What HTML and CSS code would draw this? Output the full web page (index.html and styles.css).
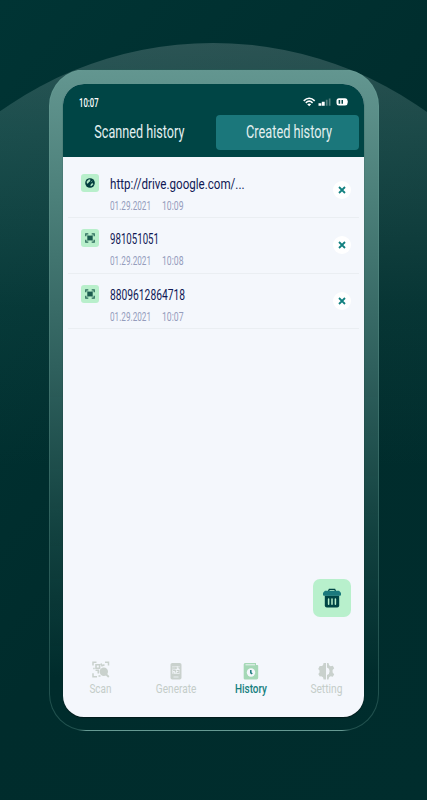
FILE: index.html
```html
<!DOCTYPE html>
<html lang="en">
<head>
  <meta charset="UTF-8">
  <title>Created history</title>
  <link rel="stylesheet" href="styles.css">
</head>
<body>
<div class="page">
  <div class="phone">
    <div class="screen">
      <div class="header">
        <div class="status">
          <span class="clock"><span class="text">10:07</span></span>
          <svg width="46" height="10" viewBox="0 0 46 10">
            <g fill="none" stroke="#fff" stroke-width="1.6">
              <path d="M.7 3.8Q6.200-1.300 11.700 3.800"/>
              <path d="M2.800 5.800Q6.200 2.600 9.600 5.800"/>
            </g>
            <path d="M4.200 7.300Q6.200 5.700 8.200 7.300L6.200 9.200z" fill="#fff"/>
            <path d="M15.500 6.200h2.800v2.600h-2.800zM18.800 4.700h2.900v4.100h-2.900z" fill="#fff"/>
            <path d="M22.800 2.800h1.800v6h-1.800zM25.800 1.500h1.700v7.300h-1.700z" fill="#55807f"/>
            <rect x="33.500" y="1.200" width="11" height="7.200" rx="2.500" fill="#fff"/>
            <path d="M44.400 3.400q1.400 1.300 0 2.800z" fill="#fff"/>
            <path d="M35.600 3h1.600v3.700h-1.600zM38.500 3h1.500v3.700h-1.500z" fill="#004545"/>
          </svg>
        </div>
        <div class="tabs">
          <div class="tab"><span class="text">Scanned history</span></div>
          <div class="tab current"><span class="text">Created history</span></div>
        </div>
      </div>
      <ul class="list">
        <li>
          <span class="badge">
            <svg width="10" height="10" viewBox="0 0 10 10">
              <circle cx="5" cy="5" r="4.800" fill="#003c3c"/>
              <path d="M2 3.600l1.600-1.800 1.500-.1-.3 1.600-1.300.8-.4 1-1.100.2zM6.300 6l1.100-.8.6 1-1.300 1.500-1 .1zM7.300 2.700L6 4.200" fill="#b8efcb" stroke="#b8efcb" stroke-width=".5"/>
            </svg>
          </span>
          <div class="info">
            <p class="name link"><span class="text">http://drive.google.com/...</span></p>
            <p class="date"><span class="text">01.29.2021</span><span class="text">10:09</span></p>
          </div>
          <span class="close"><svg width="8" height="8" viewBox="0 0 8 8"><path d="M1 1l6 6M7 1L1 7"/></svg></span>
        </li>
        <li>
          <span class="badge">
            <svg width="10" height="10" viewBox="0 0 10 10">
              <path d="M.8 3.300V.9H3.300M6.700 .9h2.500v2.400M9.200 6.700v2.400H6.700M3.300 9.100H.8V6.700" fill="none" stroke="#2a6b5b" stroke-width="1.300"/>
              <path d="M2.200 2.200l1.600.6h2.400l1.600-.6v5.600l-1.600-.6H3.800l-1.600.6z" fill="#2a6b5b"/>
              <path d="M4 2.500v5M6 2.500v5" stroke="#08443f" stroke-width=".8"/>
            </svg>
          </span>
          <div class="info">
            <p class="name n9"><span class="text">981051051</span></p>
            <p class="date"><span class="text">01.29.2021</span><span class="text">10:08</span></p>
          </div>
          <span class="close"><svg width="8" height="8" viewBox="0 0 8 8"><path d="M1 1l6 6M7 1L1 7"/></svg></span>
        </li>
        <li>
          <span class="badge">
            <svg width="10" height="10" viewBox="0 0 10 10">
              <path d="M.8 3.300V.9H3.300M6.700 .9h2.500v2.400M9.200 6.700v2.400H6.700M3.300 9.100H.8V6.700" fill="none" stroke="#2a6b5b" stroke-width="1.300"/>
              <path d="M2.200 2.200l1.600.6h2.400l1.600-.6v5.600l-1.600-.6H3.800l-1.600.6z" fill="#2a6b5b"/>
              <path d="M4 2.500v5M6 2.500v5" stroke="#08443f" stroke-width=".8"/>
            </svg>
          </span>
          <div class="info">
            <p class="name n13"><span class="text">8809612864718</span></p>
            <p class="date"><span class="text">01.29.2021</span><span class="text">10:07</span></p>
          </div>
          <span class="close"><svg width="8" height="8" viewBox="0 0 8 8"><path d="M1 1l6 6M7 1L1 7"/></svg></span>
        </li>
      </ul>
      <div class="trash">
        <svg width="18" height="20" viewBox="0 0 18 20">
          <path d="M5.500 3.200l.8-1.900h5.400l.8 1.900" fill="none" stroke="#004545" stroke-width="1.300"/>
          <path d="M1.800 7.500h14.400v10q0 2-2 2H3.800q-2 0-2-2z" fill="#004545"/>
          <path d="M2 2.800h14l2 2v2q0 1-1 1H1q-1 0-1-1v-2z" fill="#1b797d"/>
          <path d="M5.600 11v5.200M9 11v5.200M12.400 11v5.200" stroke="#b8efcb" stroke-width="1.500" stroke-linecap="round"/>
        </svg>
      </div>
      <div class="nav">
        <div class="item">
          <svg width="18" height="18" viewBox="0 0 18 18">
            <path d="M1 4.500V1.200h3.500M13 1.200h3.500v3.300M5 15.800H1v-3.600" fill="none" stroke="#c9d1cd" stroke-width="1.500"/>
            <path d="M4 3.800h3.600v3.400H4zM9 2.500l1 2.200 2.500-1M1.200 7.500h1.500M3.500 9.200h2.800v3.400M6.500 15h2" fill="none" stroke="#c9d1cd" stroke-width="1.600"/>
            <circle cx="11.800" cy="10.700" r="4.200" fill="#c9d1cd"/>
            <path d="M13.800 13l3 3" stroke="#c9d1cd" stroke-width="1.800"/>
          </svg>
          <span class="text">Scan</span>
        </div>
        <div class="item">
          <svg width="18" height="18" viewBox="0 0 18 18">
            <rect x="3.500" y="1" width="11" height="16.500" rx="1.800" fill="#c9d1cd"/>
            <path d="M5.300 4h7.400v7.700H5.300z" fill="#eff3f6"/>
            <path d="M6 5h2v2H6zM9.200 4.500v2.600M10.500 5h1.800v2M6 8.500h2.400v2M9.700 8.500h2.200v2H9.800M6 11h1" fill="none" stroke="#c9d1cd" stroke-width="1.100"/>
            <path d="M6.500 15h5" stroke="#f4f7fc" stroke-width=".8"/>
          </svg>
          <span class="text">Generate</span>
        </div>
        <div class="item current">
          <svg width="18" height="18" viewBox="0 0 18 18">
            <path d="M3 1h11v2h1.400q.8 0 .8.800v12q0 1.700-1.700 1.700H3q-1.300 0-1.300-1.300V2.500Q1.700 1 3 1z" fill="#a5d8b6"/>
            <path d="M3.500 2.800H13" stroke="#f4f7fc" stroke-width=".9"/>
            <circle cx="9" cy="10.500" r="4.200" fill="#f4f7fc"/>
            <path d="M8.800 8v2.900l1.500 1" fill="none" stroke="#1b797d" stroke-width="1.500"/>
          </svg>
          <span class="text">History</span>
        </div>
        <div class="item">
          <svg width="18" height="18" viewBox="0 0 18 18">
            <path d="M9 1v16.500H6.600L6 15.200l-1.800-1-1.400.3-1.500-2.600 1.200-1.400V8.400L1.200 7l1.500-3 2-.1L6 3.200 6.600 1z" fill="#c9d1cd"/>
            <path d="M10 1h1.500l.6 2.300 1.500.9 2.200-.5 1.400 2.600-1.600 1.800v2.300l1.600 1.800-1.400 2.600-2.200-.5-1.500.9-.6 2.300H10v-4.500q2.600-.7 2.600-3.700T10 5.500z" fill="#c9d1cd"/>
          </svg>
          <span class="text">Setting</span>
        </div>
      </div>
    </div>
  </div>
</div>
<script>
  // the labels are narrowed to these widths, in px
  var widths = [
    ['.clock .text', 19.5],
    ['.tab .text', 90],
    ['.tab.current .text', 86],
    ['.link .text', 134.5],
    ['.n9 .text', 49],
    ['.n13 .text', 75],
    ['.date .text:first-child', 41],
    ['.date .text:last-child', 21.5],
    ['.item:nth-child(1) .text', 22],
    ['.item:nth-child(2) .text', 40.5],
    ['.item:nth-child(3) .text', 32],
    ['.item:nth-child(4) .text', 32]
  ];
  for (var i = 0; i < widths.length; i++) {
    var els = document.querySelectorAll(widths[i][0]);
    for (var j = 0; j < els.length; j++) {
      els[j].style.transform = 'none';
      var natural = els[j].getBoundingClientRect().width;
      els[j].style.transform = 'scaleX(' + widths[i][1] / natural + ')';
    }
  }
</script>
</body>
</html>
```
FILE: styles.css
```css
* {
  padding: 0;
  margin: 0;
  list-style: none;
  box-sizing: border-box;
}

body {
  font-family: Roboto, "Liberation Sans", sans-serif;
}

svg {
  display: block;
}

.page {
  width: 427px;
  height: 800px;
  padding: 69px 49px;
  overflow: hidden;
  position: relative;
  background: linear-gradient(130deg, #003434, #002c2c 55%, #002d2d);
}

/* big arc behind the phone */
.page::before {
  content: '';
  width: 732px;
  height: 732px;
  position: absolute;
  left: -153px;
  top: 43px;
  border-radius: 50%;
  background: linear-gradient(rgba(255, 255, 255, 0.17), rgba(130, 180, 175, 0.21) 12%, rgba(80, 150, 140, 0.09) 36%, rgba(0, 50, 50, 0) 58%);
}

.phone {
  width: 330px;
  height: 662px;
  padding: 14px 13px 14px;
  position: relative;
  border: 1px solid rgba(110, 165, 157, 0.3);
  border-radius: 37px;
  background: linear-gradient(#639690, #4b7f79 20%, #2f605d 45%, rgba(20, 68, 66, 0.9) 70%, rgba(0, 45, 45, 0.8) 92%);
}

.screen {
  width: 301px;
  height: 633px;
  display: flex;
  flex-direction: column;
  overflow: hidden;
  border-radius: 21px;
  background: #f4f7fc;
  box-shadow: 0 1px 1px rgba(0, 20, 20, 0.7);
}

.text {
  flex: none;
  white-space: nowrap;
}

.header {
  height: 73px;
  background: #004545;
}

.status {
  height: 31px;
  padding: 5px 15px 0 16px;
  display: flex;
  align-items: center;
  justify-content: space-between;
}

.clock {
  width: 20px;
  display: flex;
  justify-content: center;
  font-size: 12.5px;
  font-weight: 500;
  color: #fff;
}

.tabs {
  padding: 0 5px;
  display: flex;
}

.tab {
  height: 35px;
  flex: 1;
  display: flex;
  align-items: center;
  justify-content: center;
  line-height: 20px;
  font-size: 17.5px;
  color: #e2efef;
}

.tab:first-child {
  padding-bottom: 1px;
  margin-right: 5px;
}

.tab.current {
  flex: none;
  width: 143px;
  padding: 0 0 1px 2px;
  border-radius: 4px;
  background: #1b777b;
}

.list {
  padding: 6px 5px 0;
}

.list li {
  height: 55.3px;
  padding: 11px 8px 0 13px;
  display: flex;
  border-bottom: 1px solid #eaeef2;
}

.badge {
  width: 18px;
  height: 18px;
  margin-right: 11px;
  display: flex;
  align-items: center;
  justify-content: center;
  border-radius: 3px;
  background: #b8efcb;
}

.info {
  flex: 1;
}

.info .text {
  transform-origin: left;
}

.name {
  width: 135px;
  height: 18px;
  display: flex;
  line-height: 21px;
  font-size: 15px;
  color: #101955;
}

.date {
  padding-top: 4px;
  display: grid;
  grid-template-columns: 52px 22px;
  line-height: 20px;
  font-size: 12.5px;
  color: #959dbc;
}

.date .text {
  justify-self: start;
}

.close {
  width: 18px;
  height: 18px;
  margin-top: 7px;
  display: flex;
  align-items: center;
  justify-content: center;
  border-radius: 50%;
  background: #fff;
}

.close path {
  stroke: #128080;
  stroke-width: 1.8;
}

.trash {
  width: 38px;
  height: 38px;
  margin: auto 13px 43px auto;
  display: flex;
  align-items: center;
  justify-content: center;
  border-radius: 7px;
  background: #b8f0cc;
}

.nav {
  height: 57px;
  display: flex;
}

.item {
  flex: 1;
  padding-top: 2px;
  display: flex;
  flex-direction: column;
  align-items: center;
  line-height: 18px;
  font-size: 13px;
  color: #c4cdc9;
}

.item:first-child svg {
  margin: -1px 0 1px;
}

.item.current {
  color: #16807f;
  font-weight: 500;
}
```
